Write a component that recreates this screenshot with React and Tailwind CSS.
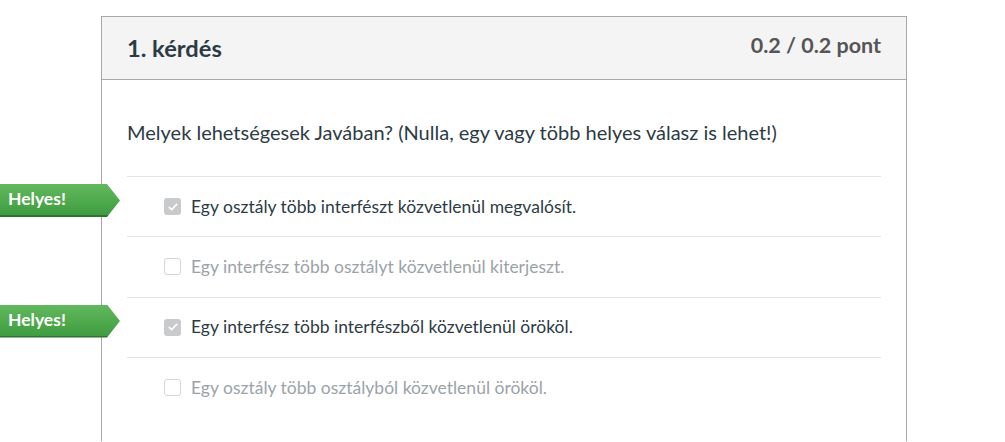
import React from 'react';

const answers = [
  { text: 'Egy osztály több interfészt közvetlenül megvalósít.', checked: true, correct: true },
  { text: 'Egy interfész több osztályt közvetlenül kiterjeszt.', checked: false },
  { text: 'Egy interfész több interfészből közvetlenül örököl.', checked: true, correct: true },
  { text: 'Egy osztály több osztályból közvetlenül örököl.', checked: false },
];

const CheckBox = ({ checked }) =>
  checked ? (
    <span className="flex h-[17px] w-[17px] shrink-0 items-center justify-center rounded-[3px] bg-[#c8cacc]">
      <svg viewBox="0 0 16 16" className="h-3 w-3" fill="none" stroke="#fff" strokeWidth="2.2" strokeLinecap="round" strokeLinejoin="round">
        <path d="M3 8.5l3.2 3L13 4.5" />
      </svg>
    </span>
  ) : (
    <span className="h-[17px] w-[17px] shrink-0 rounded-[3px] border border-[#d4d6d8] bg-white" />
  );

const CorrectFlag = () => (
  <div className="absolute left-[-127px] top-[7px] h-[33px] w-[120px] bg-gradient-to-b from-[#62b95d] to-[#3f9c40] border-b-2 border-[#2f7331] [clip-path:polygon(0_0,107px_0,120px_50%,107px_100%,0_100%)]">
    <span className="block pl-2 pt-[5px] text-[17.5px] font-bold leading-5 text-white">Helyes!</span>
  </div>
);

export default function App() {
  return (
    <div className="min-h-[442px] bg-white font-['Lato','Liberation_Sans',sans-serif] text-[#2d3b45]">
      <div className="pt-4">
        <div className="ml-[101px] w-[806px] border border-[#a9a9a9] border-b-0 pb-6">
          {/* Header */}
          <div className="flex h-[63px] items-start justify-between border-b border-[#a9a9a9] bg-[#f4f4f4] px-[25px]">
            <h2 className="pt-[19px] text-[23.7px] font-bold leading-6 text-[#2d3b45]">1. kérdés</h2>
            <span className="pt-[16px] text-[21.5px] font-bold leading-6 text-[#555]">0.2 / 0.2 pont</span>
          </div>

          <div className="px-[25px]">
            <p className="pt-[40px] text-[20px] leading-6">
              Melyek lehetségesek Javában? (Nulla, egy vagy több helyes válasz is lehet!)
            </p>

            <div className="mt-[32px]">
              {answers.map((a) => (
                <div key={a.text} className="relative flex h-[60.3px] items-center gap-[10px] border-t border-[#e2e4e5] pl-[37px]">
                  {a.correct && <CorrectFlag />}
                  <CheckBox checked={a.checked} />
                  <span className={`text-[17.5px] leading-5 ${a.checked ? 'text-[#2d3b45]' : 'text-[#9ba3a9]'}`}>{a.text}</span>
                </div>
              ))}
            </div>
          </div>
        </div>
      </div>
    </div>
  );
}
